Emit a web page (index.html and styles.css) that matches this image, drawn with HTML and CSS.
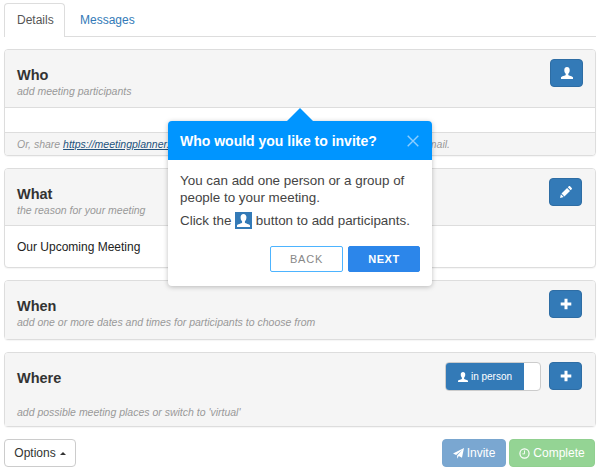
FILE: index.html
```html
<!DOCTYPE html>
<html lang="en">
<head>
<meta charset="utf-8">
<title>Meeting Planner</title>
<link rel="stylesheet" href="styles.css">
</head>
<body>
<svg class="defs" aria-hidden="true">
  <symbol id="user" viewBox="0 0 12 12"><path d="M6 0C4.300 0 3.300 1.200 3.300 3c0 1.600.5 3 1.400 3.800v1.200C4.400 8.800.2 9.200 0 10.600V12h12v-1.400C11.800 9.200 7.600 8.800 7.300 8V6.800C8.200 6 8.700 4.600 8.700 3 8.700 1.200 7.700 0 6 0z"/></symbol>
  <symbol id="pencil" viewBox="0 0 12 12"><path d="M0 12l.9-3.700 2.800 2.800zM1.500 7.600l5.600-5.600 2.900 2.900-5.600 5.600zM7.800 1.300L8.800.3c.4-.4.900-.4 1.300 0l1.600 1.600c.4.4.4.900 0 1.300l-1 1z"/></symbol>
  <symbol id="plus" viewBox="0 0 12 12"><path d="M4.500.7h3v3.800h3.800v3H7.500v3.800h-3V7.500H.7v-3h3.800z"/></symbol>
  <symbol id="send" viewBox="0 0 12 12"><path d="M12 0l-2.200 10.500-3.500-1.700L4.500 11.800V8.200L10.300 2 3.400 7.500 0 6z"/></symbol>
  <symbol id="clock" viewBox="0 0 12 12"><circle cx="6" cy="6" r="5" fill="none" stroke="currentColor" stroke-width="1.300"/><path d="M6 2.700v3.700H3.700" fill="none" stroke="currentColor"/></symbol>
</svg>
<nav class="tabs"><a class="tab active">Details</a><a class="tab">Messages</a></nav>
<main>
  <section class="panel who">
    <header class="head">
      <div><h4>Who</h4><p class="hint h-who">add meeting participants</p></div>
      <button class="btn square"><svg><use href="#user"/></svg></button>
    </header>
    <div class="blank"></div>
    <footer class="foot"><span>Or, share <a>https://meetingplanner.io</a></span><span class="tail">email.</span></footer>
    <aside class="popover">
      <div class="pop-head"><h3>Who would you like to invite?</h3><svg class="close" viewBox="0 0 12 12"><path d="M.7.7l10.600 10.600M11.300.7L.7 11.300"/></svg></div>
      <div class="pop-body">
        <p>You can add one person or a group of<br>people to your meeting.</p>
        <p class="click">Click the <span class="inline-icon"><svg><use href="#user"/></svg></span> button to add participants.</p>
      </div>
      <div class="pop-foot"><button class="back">BACK</button><button class="next">NEXT</button></div>
    </aside>
  </section>
  <section class="panel what">
    <header class="head">
      <div><h4>What</h4><p class="hint h-what">the reason for your meeting</p></div>
      <button class="btn square"><svg><use href="#pencil"/></svg></button>
    </header>
    <div class="content">Our Upcoming Meeting</div>
  </section>
  <section class="panel when">
    <header class="head">
      <div><h4>When</h4><p class="hint h-when">add one or more dates and times for participants to choose from</p></div>
      <button class="btn square"><svg><use href="#plus"/></svg></button>
    </header>
  </section>
  <section class="panel where">
    <header class="head">
      <div><h4>Where</h4><p class="hint h-where">add possible meeting places or switch to 'virtual'</p></div>
      <div class="controls">
        <div class="switch"><span class="on"><svg><use href="#user"/></svg>in person</span></div>
        <button class="btn square"><svg><use href="#plus"/></svg></button>
      </div>
    </header>
  </section>
  <div class="actions">
    <button class="btn options">Options<i class="caret"></i></button>
    <button class="btn invite"><svg><use href="#send"/></svg>Invite</button>
    <button class="btn complete"><svg><use href="#clock"/></svg>Complete</button>
  </div>
</main>
</body>
</html>
```
FILE: styles.css
```css
* { box-sizing: border-box; }
body { margin: 0; width: 600px; height: 472px; overflow: hidden; background: #fff; color: #333; font: 12px/17px "Liberation Sans", Arial, sans-serif; }
h3, h4, p { margin: 0; }
button { font: inherit; padding: 0; }
svg { fill: currentColor; flex: none; }
.defs { display: none; }
.tabs { display: flex; height: 37px; margin: 0 4px; padding-top: 3px; border-bottom: 1px solid #ddd; }
.tab { height: 33px; padding: 9px 15px; color: #337ab7; }
.tab.active { width: 61px; height: 34px; padding: 8px 0 0 12px; border: 1px solid #ddd; border-bottom: 0; border-radius: 4px 4px 0 0; background: #fff; color: #555; }
main { display: flex; flex-direction: column; gap: 12px; padding: 12px 4px 0; }
.panel { position: relative; border: 1px solid #ddd; border-radius: 4px; background: #fff; box-shadow: 0 1px 1px rgba(0,0,0,.04); }
.who { height: 107px; }
.what { height: 100px; margin-top: 0; }
.when { height: 60px; }
.where { height: 75px; }
.head { display: flex; justify-content: space-between; height: 57px; padding: 9px 13px 0 12px; border-radius: 3px 3px 0 0; background: #f5f5f5; }
.who .head { height: 58px; padding-right: 12px; border-bottom: 1px solid #ddd; }
.what .head { border-bottom: 1px solid #ddd; }
.when .head { height: 58px; }
.where .head { height: 73px; }
h4 { padding-top: 7px; font-size: 14.500px; line-height: 18px; font-weight: bold; }
.who h4 { padding-top: 7px; }
.hint { color: #999; font-size: 10.500px; line-height: 14px; font-style: italic; }
.where .hint { margin-top: 18px; }
.btn { display: flex; align-items: center; justify-content: center; border: 1px solid #2e6da4; border-radius: 4px; background: #337ab7; color: #fff; }
.square { width: 33px; height: 28px; }
.square svg { width: 12px; height: 12px; }
.blank { height: 24px; }
.foot { display: flex; justify-content: space-between; height: 23px; padding: 3px 145px 0 12px; border-top: 1px solid #ddd; border-radius: 0 0 3px 3px; background: #f5f5f5; color: #999; font-size: 10.500px; font-style: italic; }
.foot a { color: #23527c; text-decoration: underline; }
.content { padding: 13px 12px; color: #222; }
.controls { display: flex; gap: 8px; }
.switch { width: 96px; height: 29px; border: 1px solid #ccc; border-radius: 4px; background: #fff; overflow: hidden; }
.on { display: flex; align-items: center; justify-content: center; width: 78px; height: 27px; background: #337ab7; color: #fff; font-size: 10px; }
.on svg { width: 10px; height: 10px; margin-right: 3px; }
.actions { display: flex; gap: 3px; padding-right: 1px; }
.actions .btn { height: 28px; }
.actions svg { width: 11px; height: 11px; margin-right: 3px; }
.actions .options { width: 72px; margin-right: auto; border-color: #ccc; background: #fff; color: #333; }
.caret { margin-left: 4px; border: 3px solid transparent; border-top: 0; border-bottom: 3px solid #333; }
.actions .invite { width: 64px; border-color: #79a6cf; background: #7aa7d1; }
.actions .complete { width: 86px; border-color: #91d090; background: #94d494; }
.popover { position: absolute; z-index: 2; left: 163px; top: 71px; width: 264px; height: 165px; border-radius: 4px; background: #fff; box-shadow: 0 1px 5px rgba(0,0,0,.25); color: #444; }
.popover::before { content: ""; position: absolute; left: 119px; top: -13px; border: 13px solid transparent; border-top: 0; border-bottom-color: #0095ff; }
.pop-head { display: flex; align-items: center; justify-content: space-between; height: 39px; padding: 0 13px 0 12px; border-radius: 4px 4px 0 0; background: #0095ff; color: #fff; }
h3 { font-size: 14px; line-height: 18px; font-weight: bold; }
.close { width: 12px; height: 12px; margin-top: 1px; fill: none; stroke: #8dceff; stroke-width: 1.400; }
.pop-body { padding: 12px 12px 0; font-size: 13.400px; white-space: nowrap; }
.click { display: flex; align-items: center; margin-top: 5px; height: 18px; white-space: pre; }
.inline-icon { display: flex; align-items: center; justify-content: center; width: 17px; height: 17px; background: #337ab7; color: #fff; }
.inline-icon svg { width: 13px; height: 13px; }
.pop-foot { display: flex; justify-content: flex-end; gap: 5px; padding: 17px 12px 0; }
.pop-foot button { width: 73px; height: 26px; border: 1px solid #4db4ff; border-radius: 2px; background: #fff; color: #888; font-size: 11px; letter-spacing: .8px; }
.pop-foot .next { width: 72px; border-color: #2c86ea; background: #2c86ea; color: #fff; font-weight: bold; letter-spacing: .6px; }
```
